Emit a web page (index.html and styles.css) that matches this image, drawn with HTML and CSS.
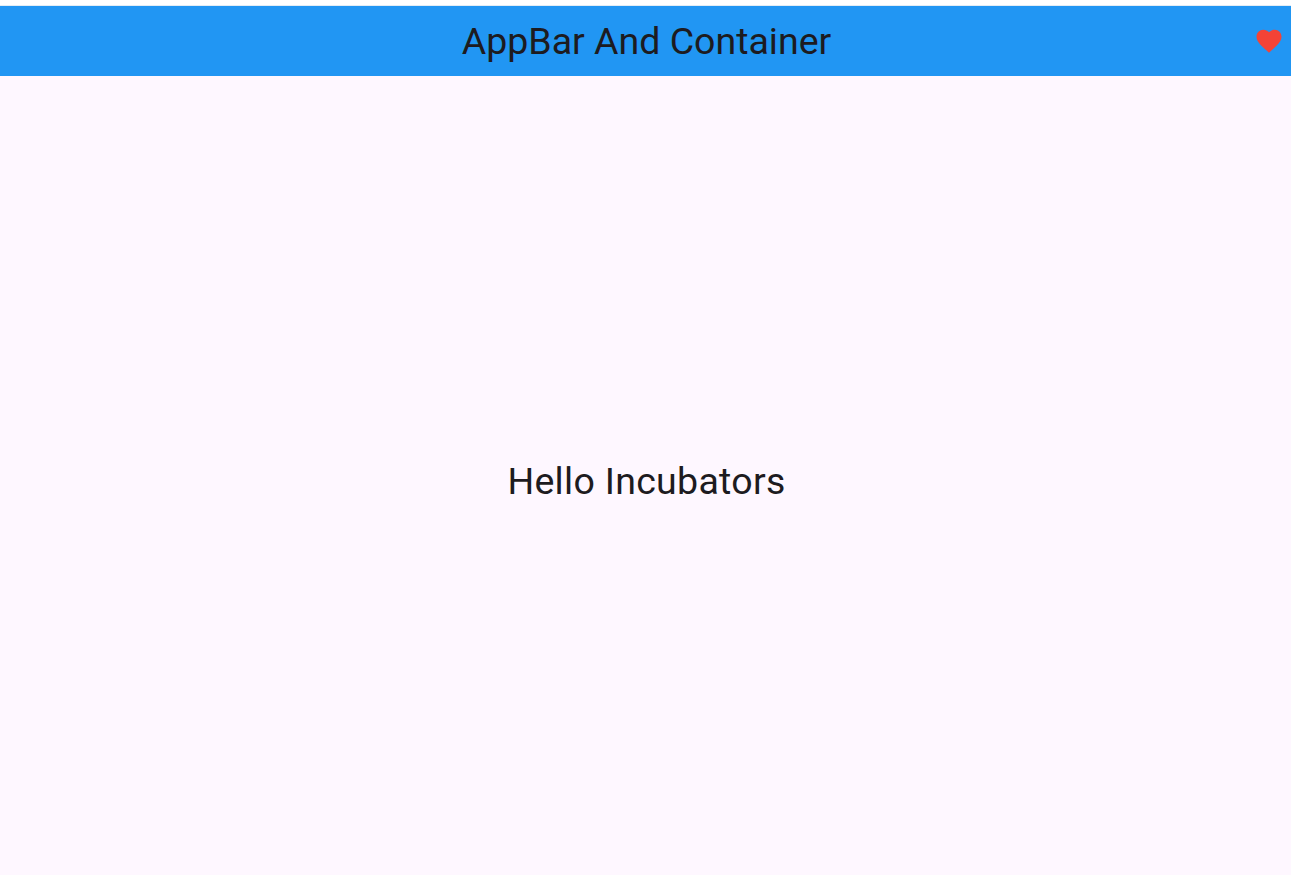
FILE: index.html
```
<!DOCTYPE html>
<html lang="en">
<head>
<meta charset="utf-8">
<title>AppBar And Container</title>
<link rel="stylesheet" href="styles.css">
</head>
<body class="page">
<header class="app-bar">
  <h1 class="title">AppBar And Container</h1>
  <svg class="favorite" viewBox="0 0 24 24" role="img" aria-label="Favorite"><path d="M12 21.35l-1.45-1.32C5.4 15.36 2 12.28 2 8.5 2 5.42 4.42 3 7.5 3c1.74 0 3.41.81 4.5 2.09C13.09 3.81 14.76 3 16.5 3 19.58 3 22 5.42 22 8.5c0 3.78-3.4 6.86-8.55 11.54L12 21.35z"/></svg>
</header>
<main class="container">
  <p class="greeting">Hello Incubators</p>
</main>
</body>
</html>
```
FILE: styles.css
```
.page {
  margin: 0;
  padding-top: 5px;
  height: 100vh;
  box-sizing: border-box;
  display: flex;
  flex-direction: column;
  background: #fff;
  color: #1d1b20;
  font-family: Roboto, sans-serif;
}
.app-bar {
  height: 71px;
  flex: none;
  box-sizing: border-box;
  border-top: 1px solid #e3edf5;
  padding-right: 7px;
  display: grid;
  grid-template-columns: 1fr auto 1fr;
  align-items: center;
  background: #2196f3;
}
.title {
  grid-column: 2;
  margin: 0 0 0 9px;
  font-size: 37.5px;
  font-weight: 400;
  white-space: nowrap;
}
.favorite {
  width: 30px;
  height: 30px;
  margin-bottom: 1px;
  justify-self: end;
  fill: #f44336;
}
.container {
  flex: 1;
  display: flex;
  align-items: center;
  justify-content: center;
  background: #fef7ff;
}
.greeting {
  margin: 11px 0 0 2px;
  font-size: 37.5px;
  letter-spacing: 0.29px;
}
```
